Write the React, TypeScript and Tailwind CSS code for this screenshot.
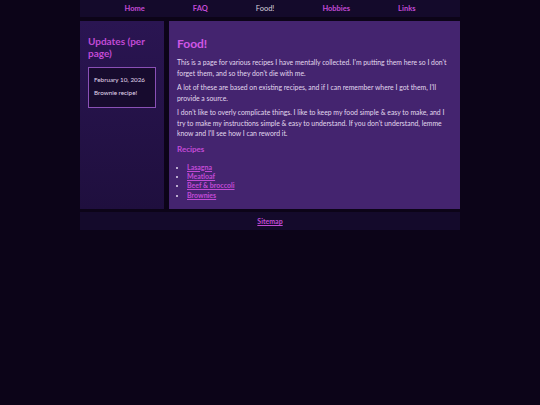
import React from 'react';

const navLinks = ['Home', 'FAQ', 'Food!', 'Hobbies', 'Links'];
const recipes = ['Lasagna', 'Meatloaf', 'Beef & broccoli', 'Brownies'];

const App = () => {
  return (
    <div
      className="min-h-[405px] bg-[#0c0418] text-[#e2d9ee]"
      style={{ fontFamily: 'Lato, "Noto Sans", sans-serif' }}
    >
      <div className="mx-auto w-[380px]">
        {/* Nav */}
        <nav className="flex h-[17px] items-center justify-center gap-12 bg-[#140a2b] text-[7.5px] font-bold">
          {navLinks.map((l) => (
            <a
              key={l}
              className={l === 'Food!' ? 'font-normal text-[#d6d0dc]' : 'text-[#c24ad6]'}
            >
              {l}
            </a>
          ))}
        </nav>

        <div className="mt-[4px] flex gap-[5px]">
          {/* Sidebar */}
          <aside className="w-[84px] h-[188px] bg-gradient-to-b from-[#2a1552] to-[#1f0f3e] px-[8px] pt-[14px]">
            <h2 className="text-[10px] font-bold leading-[12px] text-[#c24ad6]">Updates (per page)</h2>
            <div className="mt-[8px] h-[41px] border border-[#8a50b6] bg-[#170b2e] px-[5px] pt-[8px] text-[6.3px] leading-[7px]">
              <p>February 10, 2026</p>
              <p className="mt-[6px]">Brownie recipe!</p>
            </div>
          </aside>

          {/* Main */}
          <main className="flex-1 h-[188px] bg-[#44246f] px-[8px] pt-[16px]">
            <h1 className="text-[12px] font-bold leading-[14px] text-[#d157e6]">Food!</h1>
            <div className="mt-[6px] space-y-[4px] text-[6.85px] leading-[10.5px]">
              <p>
                This is a page for various recipes I have mentally collected. I'm putting them here so I don't forget them, and so they don't die with me.
              </p>
              <p>
                A lot of these are based on existing recipes, and if I can remember where I got them, I'll provide a source.
              </p>
              <p>
                I don't like to overly complicate things. I like to keep my food simple &amp; easy to make, and I try to make my instructions simple &amp; easy to understand. If you don't understand, lemme know and I'll see how I can reword it.
              </p>
            </div>
            <h3 className="mt-[4px] text-[8px] font-bold leading-[12px] text-[#c24ad6]">Recipes</h3>
            <ul className="mt-[8px] list-disc pl-[10px] text-[7px] font-bold leading-[9.4px]">
              {recipes.map((r) => (
                <li key={r} className="marker:text-[#e2d9ee]">
                  <a className="text-[#c24ad6] underline">{r}</a>
                </li>
              ))}
            </ul>
          </main>
        </div>

        {/* Footer */}
        <footer className="mt-[3px] flex h-[18px] items-center justify-center bg-[#140a2b] text-[7px] font-bold">
          <a className="text-[#c24ad6] underline">Sitemap</a>
        </footer>
      </div>
    </div>
  );
};

export default App;
